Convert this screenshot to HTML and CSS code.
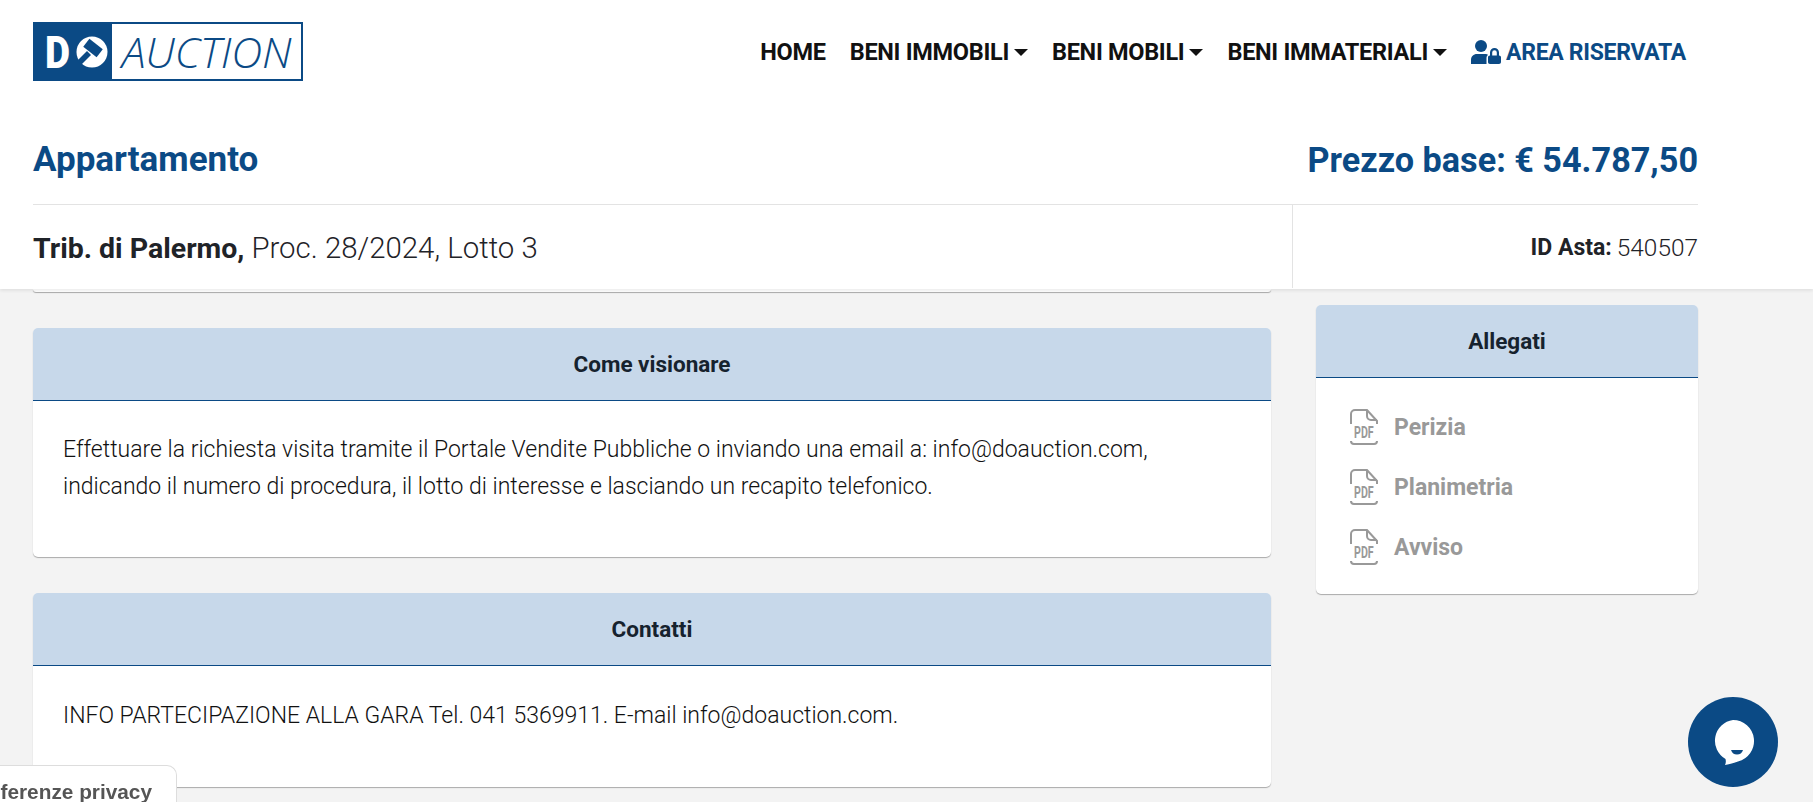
FILE: index.html
```html
<!DOCTYPE html>
<html lang="it">
<head>
    <meta charset="UTF-8">
    <meta name="viewport" content="width=device-width, initial-scale=1.0">
    <title>Appartamento - DoAuction</title>
    <link rel="stylesheet" href="styles.css">
</head>
<body>
    <header class="site-header">
        <div class="topbar">
            <a class="logo" href="#">
                <svg class="logo-mark" viewBox="0 0 79 59" width="79" height="59">
                    <rect width="79" height="59" fill="#0b4a85"/>
                    <text x="12" y="46" class="logo-d" textLength="25" lengthAdjust="spacingAndGlyphs">D</text>
                    <circle cx="59" cy="30" r="15.500" fill="#fff"/>
                    <g fill="#0b4a85">
                        <rect x="51.500" y="21" width="17" height="10" transform="rotate(38 60 26)"/>
                        <path d="M54 29 L58 33 L48 43 L44 39 Z"/>
                    </g>
                </svg>
                <span class="logo-text">AUCTION</span>
            </a>
            <nav class="nav">
                <a href="#">Home</a>
                <a href="#" class="has-caret">Beni immobili</a>
                <a href="#" class="has-caret">Beni mobili</a>
                <a href="#" class="has-caret">Beni immateriali</a>
                <a href="#" class="nav-area">
                    <svg viewBox="0 0 30 24" width="30" height="24" fill="#0b4a85">
                        <circle cx="10" cy="6" r="6"/>
                        <path d="M0 24v-4c0-3.500 2.500-6 6-6h8c1.500 0 2.500.3 3 1-1 .6-1.500 1.500-1.500 3v6z"/>
                        <path d="M19 15.500v-3a4.500 4.500 0 0 1 9 0v3c1.300 0 2 .8 2 2V22c0 1.300-.8 2-2 2h-9c-1.300 0-2-.7-2-2v-4.500c0-1.200.7-2 2-2zm2.200 0h4.600v-3a2.300 2.300 0 0 0-4.600 0z"/>
                    </svg>
                    Area riservata
                </a>
            </nav>
        </div>
        <div class="title-row">
            <h1>Appartamento</h1>
            <div class="price">Prezzo base: € 54.787,50</div>
        </div>
        <div class="info-row">
            <div class="info-main"><strong>Trib. di Palermo,</strong> Proc. 28/2024, Lotto 3</div>
            <div class="info-id"><strong>ID Asta:</strong> 540507</div>
        </div>
    </header>

    <main class="content">
        <div class="col-main">
            <div class="card-stub"></div>
            <section class="card">
                <h2 class="card-head">Come visionare</h2>
                <div class="card-body">
                    <p>Effettuare la richiesta visita tramite il Portale Vendite Pubbliche o inviando una email a: info@doauction.com, indicando il numero di procedura, il lotto di interesse e lasciando un recapito telefonico.</p>
                </div>
            </section>
            <section class="card">
                <h2 class="card-head">Contatti</h2>
                <div class="card-body card-body-short">
                    <p>INFO PARTECIPAZIONE ALLA GARA Tel. 041 5369911. E-mail info@doauction.com.</p>
                </div>
            </section>
        </div>
        <aside class="col-side">
            <section class="card">
                <h2 class="card-head">Allegati</h2>
                <ul class="files">
                    <li>
                        <svg class="pdf" viewBox="0 0 28 36" width="28" height="36">
                            <path d="M1 15V5a4 4 0 0 1 4-4h12l10 11v3" fill="none" stroke="#999" stroke-width="2"/>
                            <path d="M17 1v6a4 4 0 0 0 4 4h6" fill="none" stroke="#999" stroke-width="2"/>
                            <text class="pdf-text" transform="translate(4 29) scale(.93 1.4)">PDF</text>
                            <path d="M1 32c0 2 1 3 3 3h20c2 0 3-1 3-3" fill="none" stroke="#999" stroke-width="2"/>
                        </svg>
                        Perizia
                    </li>
                    <li>
                        <svg class="pdf" viewBox="0 0 28 36" width="28" height="36">
                            <path d="M1 15V5a4 4 0 0 1 4-4h12l10 11v3" fill="none" stroke="#999" stroke-width="2"/>
                            <path d="M17 1v6a4 4 0 0 0 4 4h6" fill="none" stroke="#999" stroke-width="2"/>
                            <text class="pdf-text" transform="translate(4 29) scale(.93 1.4)">PDF</text>
                            <path d="M1 32c0 2 1 3 3 3h20c2 0 3-1 3-3" fill="none" stroke="#999" stroke-width="2"/>
                        </svg>
                        Planimetria
                    </li>
                    <li>
                        <svg class="pdf" viewBox="0 0 28 36" width="28" height="36">
                            <path d="M1 15V5a4 4 0 0 1 4-4h12l10 11v3" fill="none" stroke="#999" stroke-width="2"/>
                            <path d="M17 1v6a4 4 0 0 0 4 4h6" fill="none" stroke="#999" stroke-width="2"/>
                            <text class="pdf-text" transform="translate(4 29) scale(.93 1.4)">PDF</text>
                            <path d="M1 32c0 2 1 3 3 3h20c2 0 3-1 3-3" fill="none" stroke="#999" stroke-width="2"/>
                        </svg>
                        Avviso
                    </li>
                </ul>
            </section>
        </aside>
    </main>

    <div class="privacy">Preferenze privacy</div>
    <button class="chat" aria-label="Chat">
        <svg viewBox="0 0 44 46" width="44" height="46">
            <path d="M22 1a21 21 0 0 1 5 41.400C22 44 17 45.500 14 46c1-2 1-4 .500-6A21 21 0 0 1 22 1z" fill="#fff"/>
            <path d="M20 31h12c-1 3-3 4.500-6 4.500S21 34 20 31z" fill="#0b4a85"/>
        </svg>
    </button>
</body>
</html>
```

FILE: styles.css
```css
html, body {
    height: 100%;
}
body {
    margin: 0;
    background: #f3f3f3;
    font-family: 'Roboto', 'Liberation Sans', sans-serif;
    color: #1f2328;
    overflow: hidden;
}
a {
    color: inherit;
    text-decoration: none;
}

/* header */
.site-header {
    position: relative;
    z-index: 2;
    height: 289px;
    box-sizing: border-box;
    padding: 22px 115px 0 33px;
    background: #fff;
    box-shadow: 0 2px 3px rgba(0, 0, 0, 0.07);
}
.topbar {
    display: flex;
    justify-content: space-between;
    align-items: flex-start;
    height: 117px;
}
.logo {
    display: flex;
    width: 270px;
    height: 59px;
    box-sizing: border-box;
    border: 2px solid #0b4a85;
    border-left: none;
}
.logo-mark {
    flex: none;
    margin: -2px 0;
}
.logo-d {
    font-family: 'Roboto', sans-serif;
    font-weight: 900;
    font-size: 45px;
    fill: #fff;
}
.logo-text {
    flex: 1;
    text-align: center;
    font-family: 'Open Sans', sans-serif;
    font-weight: 300;
    font-style: italic;
    font-size: 43px;
    line-height: 55px;
    color: #0b4a85;
    letter-spacing: -0.2px;
}
.nav {
    display: flex;
    align-items: center;
    gap: 24px;
    height: 60px;
    font-size: 23.5px;
    font-weight: 700;
    text-transform: uppercase;
    letter-spacing: -0.3px;
    margin-right: 12px;
    color: #111;
}
.has-caret::after {
    content: "";
    display: inline-block;
    margin-left: 5px;
    vertical-align: 4px;
    border-top: 7px solid #111;
    border-left: 7px solid transparent;
    border-right: 7px solid transparent;
}
.nav-area {
    display: flex;
    align-items: center;
    gap: 5px;
    font-size: 23px;
    color: #0b4a85;
}
.title-row {
    display: flex;
    justify-content: space-between;
    align-items: center;
    height: 66px;
    padding-bottom: 24px;
    box-sizing: border-box;
    border-bottom: 1px solid #e3e3e3;
    color: #0b4a85;
}
.title-row h1 {
    margin: 0;
    font-size: 35px;
    font-weight: 700;
}
.price {
    font-size: 34.2px;
    font-weight: 700;
}
.info-row {
    display: flex;
    height: 83px;
    align-items: stretch;
}
.info-main {
    flex: 1;
    display: flex;
    align-items: center;
    gap: 7px;
    padding-top: 3px;
    font-size: 29.4px;
    font-weight: 300;
    border-right: 1px solid #e3e3e3;
}
.info-main strong {
    font-size: 28.5px;
    font-weight: 700;
}
.info-id {
    width: 405px;
    display: flex;
    align-items: center;
    justify-content: flex-end;
    gap: 5px;
    padding-top: 2px;
    font-size: 24.4px;
    font-weight: 300;
}
.info-id strong {
    font-size: 23px;
    font-weight: 700;
}

/* content */
.content {
    display: grid;
    grid-template-columns: 1238px 382px;
    column-gap: 45px;
    padding: 0 33px;
}
.col-main {
    display: flex;
    flex-direction: column;
    gap: 36px;
}
.col-side {
    padding-top: 16px;
}
.card-stub {
    height: 3px;
    background: #fff;
    border-radius: 0 0 5px 5px;
    box-shadow: 0 1px 1px rgba(0, 0, 0, 0.3);
}
.card {
    background: #fff;
    border-radius: 5px;
    box-shadow: 0 1px 1px rgba(0, 0, 0, 0.3);
}
.card-head {
    margin: 0;
    height: 73px;
    line-height: 73px;
    box-sizing: border-box;
    text-align: center;
    font-size: 22.5px;
    font-weight: 700;
    color: #16222e;
    background: #c7d8ea;
    border-bottom: 1px solid #0b4a85;
    border-radius: 5px 5px 0 0;
}
.card-body {
    height: 156px;
    box-sizing: border-box;
    padding: 30px 30px 0;
    font-size: 23px;
    font-weight: 300;
    line-height: 37px;
    color: #111;
}
.card-body-short {
    height: 121px;
    padding-top: 31px;
}
.card-body p {
    margin: 0;
}
.files {
    list-style: none;
    margin: 0;
    padding: 19px 34px 17px;
}
.files li {
    display: flex;
    align-items: center;
    gap: 16px;
    height: 60px;
    font-size: 23px;
    font-weight: 700;
    color: #999;
}
.pdf-text {
    font-family: 'Roboto', sans-serif;
    font-size: 11.5px;
    font-weight: 700;
    fill: #999;
}

/* floating */
.privacy {
    position: fixed;
    left: -42px;
    bottom: 0;
    width: 219px;
    height: 37px;
    box-sizing: border-box;
    padding: 14px 0 0 8px;
    background: #fff;
    border: 1px solid #ddd;
    border-bottom: none;
    border-radius: 0 10px 0 0;
    font-family: 'Liberation Sans', sans-serif;
    font-size: 20.8px;
    font-weight: 700;
    color: #555;
    white-space: nowrap;
    z-index: 3;
}
.chat {
    position: fixed;
    left: 1688px;
    top: 697px;
    width: 90px;
    height: 90px;
    padding: 0;
    border: none;
    border-radius: 50%;
    background: #0b4a85;
    display: flex;
    align-items: center;
    justify-content: center;
    z-index: 3;
}
```
